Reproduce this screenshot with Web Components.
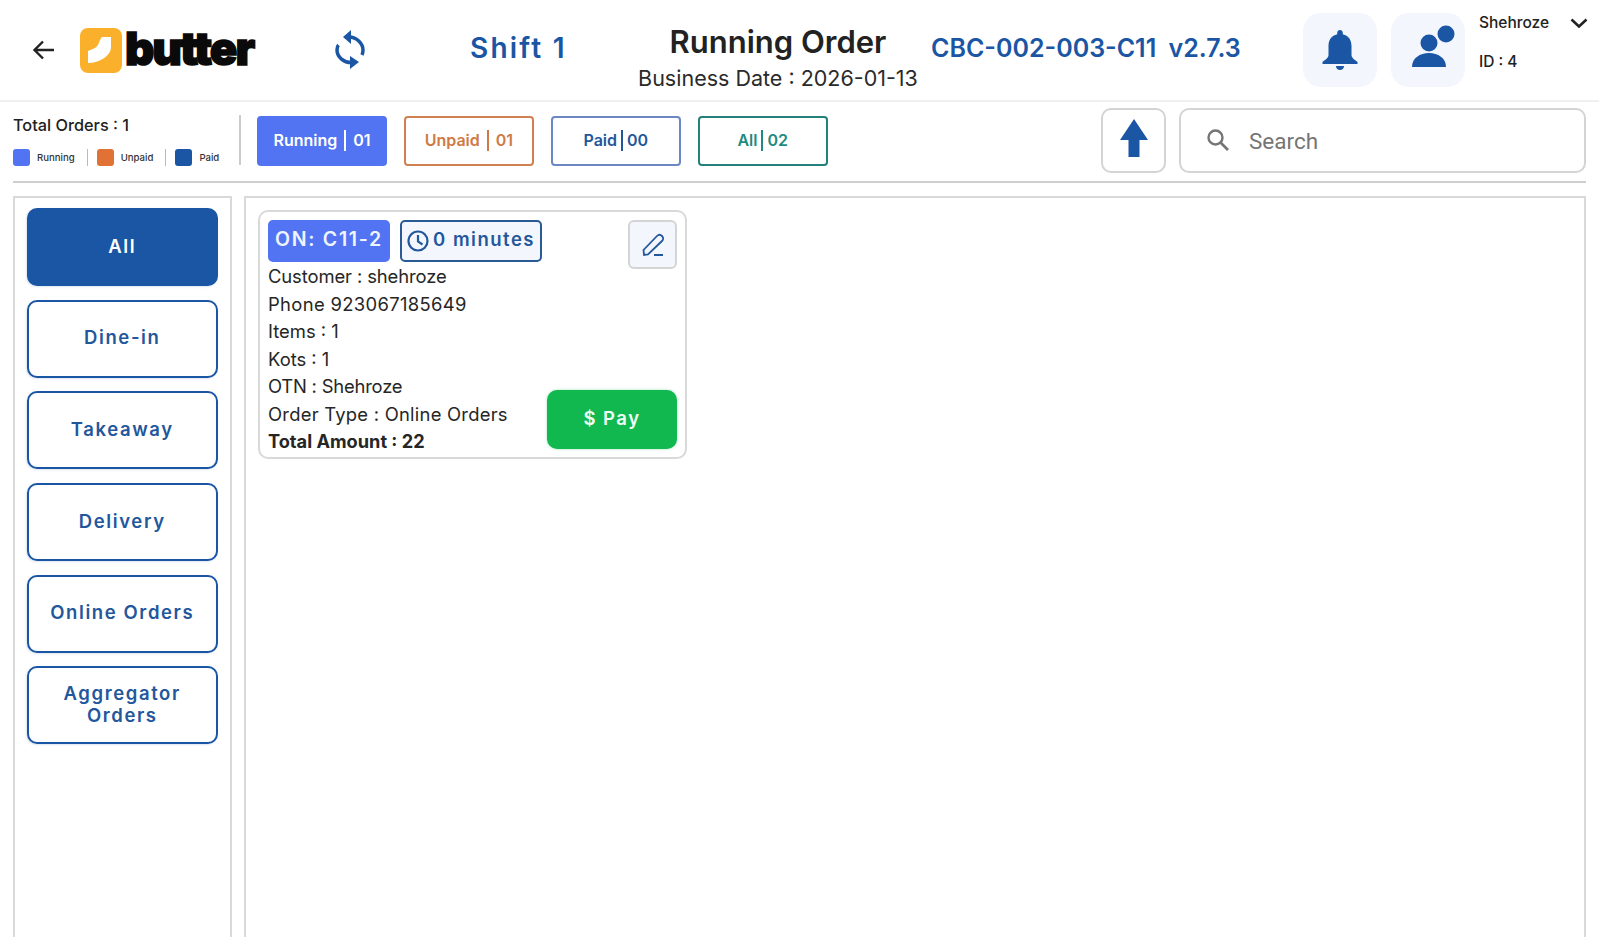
<!DOCTYPE html>
<html>
<head>
<meta charset="utf-8">
<title>Running Order</title>
<style>
  html, body { margin: 0; height: 100%; background: #fff; overflow: hidden; }
  body { font-family: Inter, "Noto Sans", sans-serif; color: #222; }
</style>
</head>
<body>
<pos-header></pos-header>
<pos-toolbar></pos-toolbar>
<pos-orders></pos-orders>

<script>
class PosHeader extends HTMLElement {
  constructor() {
    super();
    this.attachShadow({ mode: "open" }).innerHTML = `
      <style>
        :host { display: flex; align-items: center; height: 100px; border-bottom: 2px solid #f0f0f0; }
        .back { margin-left: 32px; width: 24px; height: 24px; flex: none; }
        .logo { margin-left: 24px; display: flex; align-items: center; width: 176px; flex: none; }
        .logo svg { width: 42px; height: 45px; flex: none; }
        .brand { font: 900 45.500px/1 Inter, sans-serif; letter-spacing: -2px; color: #0a0a0a; -webkit-text-stroke: 1.5px #0a0a0a; margin-left: 3px; margin-top: -3px; }
        .sync { margin-left: 76px; width: 36px; height: 40px; flex: none; }
        .shift { margin-left: 102px; width: 98px; flex: none; margin-bottom: 4px; white-space: nowrap; font: 600 28px Inter, sans-serif; letter-spacing: 2.200px; color: #1a56a4; }
        .title { margin-left: 65px; margin-top: 20px; width: 290px; flex: none; text-align: center; }
        .title h1 { margin: 0; font: 600 31px/36px Inter, sans-serif; color: #222; }
        .title p { margin: 0; font: 400 21.500px/36px Inter, sans-serif; color: #2a2a2a; white-space: nowrap; }
        .code { margin-left: 8px; width: 372px; flex: none; margin-bottom: 4px; white-space: nowrap; font: 600 25px Inter, sans-serif; color: #1a56a4; word-spacing: 6px; }
        .tile { width: 74px; height: 74px; border-radius: 18px; background: #f3f7fd; display: flex; align-items: center; justify-content: center; flex: none; }
        .tile + .tile { margin-left: 14px; }
        .user { margin-left: 14px; flex: 1; height: 74px; font: 500 15.500px Inter, sans-serif; color: #222; margin-right: 11px; margin-top: -20px; }
        .user div { display: flex; justify-content: space-between; align-items: center; height: 39px; }
      </style>
      <svg class="back" viewBox="0 0 24 24"><path d="M22 12H3M11 3.500 2.500 12l8.500 8.500" fill="none" stroke="#222" stroke-width="2.400"/></svg>
      <div class="logo">
        <svg viewBox="0 0 42 45"><rect width="42" height="45" rx="8" fill="#fbb02c"/><path d="M31 9H22C19 12 19 18 15 20L8 23V35C20 35 30 28 31 20Z" fill="#fff"/></svg>
        <span class="brand">butter</span>
      </div>
      <svg class="sync" viewBox="0 0 36 40" fill="none" stroke="#1a56a4" stroke-width="3.500">
        <path d="M17 7C25 7 31 14 31 20 31 22 30.500 24 30 25"/><path d="M11 7 19 0V14z" fill="#1a56a4" stroke="none"/>
        <path d="M20 32.500C12 33 5 27 5 20 5 18 5.500 16 6.500 15"/><path d="M27 32 18 26V39z" fill="#1a56a4" stroke="none"/>
      </svg>
      <div class="shift">Shift 1</div>
      <div class="title"><h1>Running Order</h1><p>Business Date : 2026-01-13</p></div>
      <div class="code">CBC-002-003-C11 v2.7.3</div>
      <div class="tile">
        <svg width="36" height="42" viewBox="0 0 36 42" fill="#1a56a4"><path d="M18 1c1.600 0 2.800 1.200 2.800 2.800v1.500C26.500 6.600 29.500 11 29.500 17v9c0 3 3 4.500 6 7v2H.5v-2c3-2.500 6-4 6-7v-9C6.500 11 9.500 6.600 15.200 5.300V3.800C15.200 2.200 16.400 1 18 1z"/><path d="M14 37h8c0 2.500-1.800 4-4 4s-4-1.500-4-4z"/></svg>
      </div>
      <div class="tile">
        <svg width="54" height="50" viewBox="0 0 54 50" fill="#1a56a4"><circle cx="45" cy="9" r="8.500"/><circle cx="28" cy="18" r="8.500"/><path d="M11 42C11 33 19 28 28 28 37 28 45 33 45 42Z"/></svg>
      </div>
      <div class="user">
        <div>Shehroze<svg width="18" height="10" viewBox="0 0 18 10"><path d="M1.500 1.500 9 8.500l7.500-7" fill="none" stroke="#222" stroke-width="2.600"/></svg></div>
        <div>ID : 4</div>
      </div>`;
  }
}

class PosTab extends HTMLElement {
  constructor() {
    super();
    this.attachShadow({ mode: "open" }).innerHTML = `
      <style>
        :host { display: flex; align-items: center; justify-content: center; box-sizing: border-box; width: 130px; height: 50px; padding-bottom: 2px; border: 2px solid var(--line); border-radius: 4px; color: var(--ink); background: var(--fill, #fff); font: 600 16px Inter, sans-serif; }
        i { width: 2px; height: 21px; background: currentColor; margin: 0 var(--sep, 7px); }
      </style>
      <span></span><i></i><span></span>`;
    const spans = this.shadowRoot.querySelectorAll("span");
    spans[0].textContent = this.getAttribute("label");
    spans[1].textContent = this.getAttribute("count");
  }
}

class PosLegend extends HTMLElement {
  constructor() {
    super();
    this.attachShadow({ mode: "open" }).innerHTML = `
      <style>
        :host { display: flex; align-items: center; font: 500 9.600px Inter, sans-serif; color: #333; }
        b { width: 17px; height: 17px; border-radius: 3px; background: var(--c); margin-right: 7px; }
      </style>
      <b></b><slot></slot>`;
  }
}

class PosToolbar extends HTMLElement {
  constructor() {
    super();
    this.attachShadow({ mode: "open" }).innerHTML = `
      <style>
        :host { display: flex; align-items: flex-start; height: 79px; margin: 0 13px; border-bottom: 2px solid #cfcfcf; }
        .sum { width: 226px; height: 66px; padding-top: 13px; box-sizing: border-box; flex: none; }
        .total { font: 500 16.300px/20px Inter, sans-serif; color: #222; }
        .legend { display: flex; align-items: center; margin-top: 14px; }
        .legend i { width: 1px; height: 17px; background: #bbb; margin: 0 9px 0 12px; }
        .vr { width: 2px; height: 50px; background: #ccc; margin-top: 13px; margin-right: 16px; flex: none; }
        .tabs { display: flex; gap: 16.900px; margin-top: 14px; }
        .up { margin-left: auto; margin-top: 6px; width: 65px; height: 65px; padding-bottom: 6px; box-sizing: border-box; border: 2px solid #d4d4d4; border-radius: 10px; display: flex; align-items: center; justify-content: center; }
        .search { margin-left: 13px; margin-top: 6px; width: 407px; height: 65px; padding-top: 1px; box-sizing: border-box; border: 2px solid #d4d4d4; border-radius: 10px; display: flex; align-items: center; padding-left: 25px; font: 400 22.500px "Roboto", sans-serif; color: #757575; }
        .search svg { margin-right: 19px; margin-bottom: 2px; }
      </style>
      <div class="sum">
        <div class="total">Total Orders : 1</div>
        <div class="legend">
          <pos-legend style="--c:#5274f2">Running</pos-legend><i></i>
          <pos-legend style="--c:#e07236">Unpaid</pos-legend><i></i>
          <pos-legend style="--c:#1a56a4">Paid</pos-legend>
        </div>
      </div>
      <div class="vr"></div>
      <div class="tabs">
        <pos-tab label="Running" count="01" style="--line:#5274f2;--ink:#fff;--fill:#5274f2"></pos-tab>
        <pos-tab label="Unpaid" count="01" style="--line:#cf8152;--ink:#cf7a45"></pos-tab>
        <pos-tab label="Paid" count="00" style="--line:#6d87c4;--ink:#23579c;--sep:4px"></pos-tab>
        <pos-tab label="All" count="02" style="--line:#23807a;--ink:#1f8a80;--sep:4px"></pos-tab>
      </div>
      <div class="up"><svg width="28" height="38" viewBox="0 0 28 38"><path d="M14 0 28 21H19.500V38H8.500V21H0z" fill="#1a56a4"/></svg></div>
      <div class="search">
        <svg width="24" height="24" viewBox="0 0 24 24"><circle cx="9.500" cy="9.500" r="7" fill="none" stroke="#757575" stroke-width="2.400"/><path d="M14.500 14.500 22 22" stroke="#757575" stroke-width="2.600"/></svg>
        Search
      </div>`;
  }
}

class PosFilter extends HTMLElement {
  constructor() {
    super();
    this.attachShadow({ mode: "open" }).innerHTML = `
      <style>
        :host { display: flex; align-items: center; justify-content: center; text-align: center; box-sizing: border-box; height: 78px; padding: 0 16px 3px; border: 2px solid #1a56a4; border-radius: 10px; background: #fff; color: #23579c; font: 600 18.500px/22px Inter, sans-serif; letter-spacing: 1.600px; box-shadow: -1px 1px 2px rgba(26,86,164,.15); }
        :host([active]) { background: #1a56a4; color: #fff; }
      </style>
      <slot></slot>`;
  }
}

class PosCard extends HTMLElement {
  constructor() {
    super();
    this.attachShadow({ mode: "open" }).innerHTML = `
      <style>
        :host { display: block; position: relative; box-sizing: border-box; width: 429px; height: 249px; border: 2px solid #d9d9d9; border-radius: 10px; padding: 8px 8px 0; font: 400 18.400px/27.540px Inter, sans-serif; color: #262626; }
        .tags { display: flex; gap: 10px; margin-bottom: 1px; height: 42px; }
        .on, .time { display: flex; align-items: center; box-sizing: border-box; height: 42px; border-radius: 5px; font: 600 19.500px Inter, sans-serif; letter-spacing: 1.700px; padding-bottom: 4px; }
        .on { width: 122px; justify-content: center; background: #5274f2; color: #f0f4ff; }
        .time { width: 142px; justify-content: center; border: 2px solid #2a5a94; background: #f3f7fd; color: #23579c; gap: 4px; white-space: nowrap; font-size: 18.500px; letter-spacing: 1.500px; }
        .time svg { margin-top: 4px; }
        .edit { position: absolute; top: 8px; right: 8px; width: 49px; height: 49px; box-sizing: border-box; border: 2px solid #d4d4d4; border-radius: 6px; background: #f3f7fd; display: flex; align-items: center; justify-content: center; }
        .pay { position: absolute; right: 8px; bottom: 8px; width: 130px; height: 59px; padding-bottom: 3px; box-sizing: border-box; border-radius: 10px; background: #10b84f; color: #f0fff5; display: flex; align-items: center; justify-content: center; font: 600 18.500px Inter, sans-serif; letter-spacing: 1.500px; box-shadow: 0 0 3px rgba(16,184,79,.4); }
        b { font-weight: 700; font-size: 18.200px; }
      </style>
      <div class="tags">
        <div class="on">ON: C11-2</div>
        <div class="time">
          <svg width="22" height="22" viewBox="0 0 22 22" fill="none" stroke="#23579c" stroke-width="2.200"><circle cx="11" cy="11" r="9.500"/><path d="M11 5v6.500l4.500 3"/></svg>
          0 minutes
        </div>
      </div>
      <div class="edit"><svg width="24" height="24" viewBox="0 0 24 24" fill="none" stroke="#23579c" stroke-width="1.800"><path d="M3 22 2.500 17 16 3c1.500-1.500 3.500-1.500 5 0s1.500 3.500 0 5L7 21.500zM13 22h9"/></svg></div>
      <div style="letter-spacing:-.1px">Customer : shehroze</div>
      <div style="letter-spacing:.35px">Phone 923067185649</div>
      <div>Items : 1</div>
      <div>Kots : 1</div>
      <div style="letter-spacing:-.2px">OTN : Shehroze</div>
      <div style="letter-spacing:.25px">Order Type : Online Orders</div>
      <div><b>Total Amount : 22</b></div>
      <div class="pay">$ Pay</div>`;
  }
}

class PosOrders extends HTMLElement {
  constructor() {
    super();
    this.attachShadow({ mode: "open" }).innerHTML = `
      <style>
        :host { display: flex; gap: 12px; margin: 13px 13px 0; height: 760px; }
        .side { width: 219px; box-sizing: border-box; flex: none; border: 2px solid #d9d9d9; border-bottom: 0; padding: 10px 12px 10px 11.500px; display: flex; flex-direction: column; gap: 13.700px; }
        .main { flex: 1; border: 2px solid #d9d9d9; border-bottom: 0; padding: 12px; }
      </style>
      <div class="side">
        <pos-filter active>All</pos-filter>
        <pos-filter>Dine-in</pos-filter>
        <pos-filter>Takeaway</pos-filter>
        <pos-filter>Delivery</pos-filter>
        <pos-filter>Online Orders</pos-filter>
        <pos-filter>Aggregator Orders</pos-filter>
      </div>
      <div class="main"><pos-card></pos-card></div>`;
  }
}

customElements.define("pos-tab", PosTab);
customElements.define("pos-legend", PosLegend);
customElements.define("pos-filter", PosFilter);
customElements.define("pos-card", PosCard);
customElements.define("pos-header", PosHeader);
customElements.define("pos-toolbar", PosToolbar);
customElements.define("pos-orders", PosOrders);
</script>
</body>
</html>
